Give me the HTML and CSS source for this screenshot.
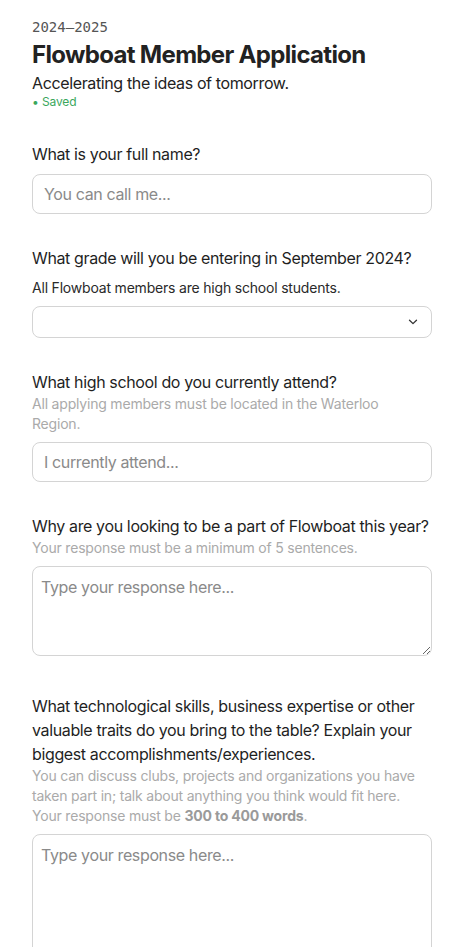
FILE: index.html
```html
<!DOCTYPE html>
<html lang="en">
<head>
<meta charset="utf-8">
<title>Flowboat Member Application</title>
<link rel="stylesheet" href="styles.css">
</head>
<body>
<main class="page">
  <header class="head">
    <div class="year">2024–2025</div>
    <h1 class="title">Flowboat Member Application</h1>
    <p class="tagline">Accelerating the ideas of tomorrow.</p>
    <div class="saved">• Saved</div>
  </header>

  <section class="field">
    <label class="label">What is your full name?</label>
    <input class="input" type="text" placeholder="You can call me...">
  </section>

  <section class="field">
    <label class="label">What grade will you be entering in September 2024?</label>
    <p class="note">All Flowboat members are high school students.</p>
    <div class="select">
      <svg class="chev" width="10" height="6" viewBox="0 0 10 6"><path d="M1.5 1.2 L5 4.6 L8.5 1.2" fill="none" stroke="#333" stroke-width="1.3" stroke-linecap="round" stroke-linejoin="round"/></svg>
    </div>
  </section>

  <section class="field">
    <label class="label">What high school do you currently attend?</label>
    <p class="desc">All applying members must be located in the Waterloo Region.</p>
    <input class="input" type="text" placeholder="I currently attend...">
  </section>

  <section class="field">
    <label class="label">Why are you looking to be a part of Flowboat this year?</label>
    <p class="desc">Your response must be a minimum of 5 sentences.</p>
    <textarea class="area" placeholder="Type your response here..."></textarea>
  </section>

  <section class="field">
    <label class="label">What technological skills, business expertise or other valuable traits do you bring to the table? Explain your biggest accomplishments/experiences.</label>
    <p class="desc">You can discuss clubs, projects and organizations you have taken part in; talk about anything you think would fit here. Your response must be <b>300 to 400 words</b>.</p>
    <textarea class="area tall" placeholder="Type your response here..."></textarea>
  </section>
</main>
</body>
</html>
```
FILE: styles.css
```css
* { box-sizing: border-box; }
html, body { margin: 0; padding: 0; background: #fff; }
body {
  font-family: Inter, "Noto Sans", sans-serif;
  color: #1f1f1f;
}
.page {
  width: 400px;
  margin-left: 32px;
  padding-top: 17px;
  display: flex;
  flex-direction: column;
  gap: 32px;
}
.head { display: flex; flex-direction: column; }
.year {
  font-family: "DejaVu Sans Mono", monospace;
  font-size: 14px;
  line-height: 20px;
  color: #555;
}
.title {
  margin: 2px 0 0;
  font-size: 24px;
  line-height: 32px;
  font-weight: 700;
  letter-spacing: -0.028em;
  color: #222;
}
.tagline {
  margin: 0;
  font-size: 16px;
  line-height: 24px;
  letter-spacing: -0.023em;
  color: #222;
}
.saved {
  margin-top: -1px;
  font-size: 12px;
  line-height: 16px;
  letter-spacing: -0.01em;
  color: #3aa75c;
}
.field { display: flex; flex-direction: column; }
.label {
  font-size: 16px;
  line-height: 24px;
  letter-spacing: -0.023em;
  color: #1f1f1f;
}
.note {
  margin: 8px 0 0;
  font-size: 14px;
  line-height: 20px;
  letter-spacing: -0.014em;
  color: #2a2a2a;
}
.desc {
  margin: 0;
  max-width: 390px;
  font-size: 14px;
  line-height: 20px;
  letter-spacing: -0.014em;
  color: #aaaaaa;
}
.desc b { font-weight: 700; color: #9a9a9a; }
.input, .select, .area {
  margin-top: 8px;
  width: 400px;
  border: 1px solid #d4d4d4;
  border-radius: 8px;
  background: #fff;
  font-family: inherit;
  font-size: 16px;
  letter-spacing: -0.023em;
  color: #222;
}
.input {
  height: 40px;
  padding: 0 11px;
}
.input::placeholder, .area::placeholder { color: #8a8a8a; }
.select {
  height: 32px;
  display: flex;
  align-items: center;
  justify-content: flex-end;
  padding-right: 13px;
}
.area {
  height: 90px;
  padding: 8px 8px;
  resize: vertical;
  line-height: 24px;
  margin-bottom: 6px;
}
.area.tall { height: 160px; }
```
